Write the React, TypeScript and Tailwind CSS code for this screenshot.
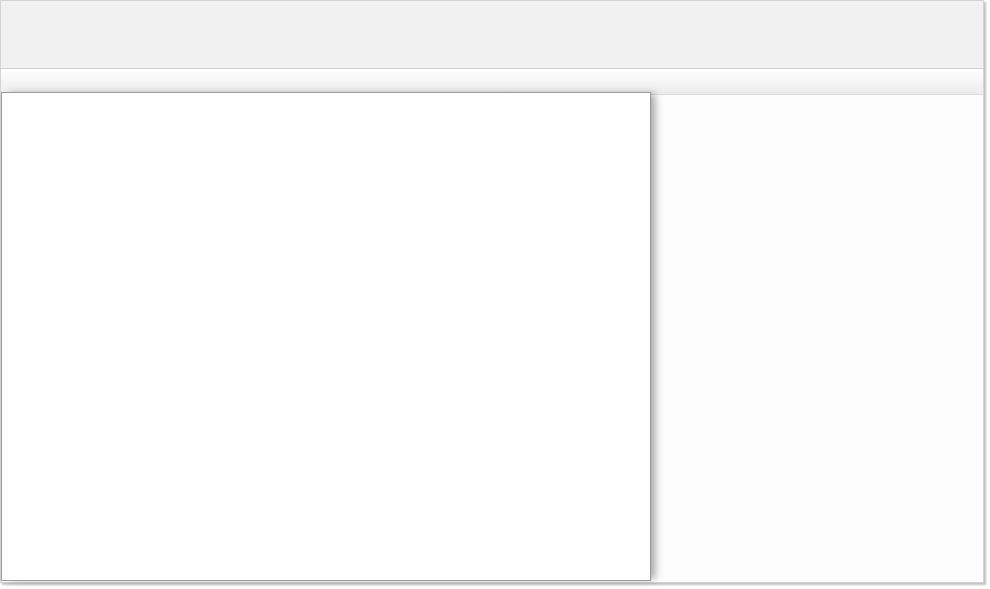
import React from 'react';

const App = () => {
  return (
    <div className="w-[990px] h-[589px] bg-white font-['Liberation_Sans',sans-serif]">
      <div className="w-[984px] h-[583px] flex flex-col border border-[#d4d4d4] bg-[#fdfdfd] shadow-[2px_2px_2px_rgba(0,0,0,0.25)]">
        <header className="h-[68px] shrink-0 bg-[#f1f1f1] border-b border-[#cfcfcf]"></header>
        <div className="h-[26px] shrink-0 bg-gradient-to-b from-white to-[#ececec] border-b border-[#dcdcdc]"></div>
        <div className="flex flex-1 min-h-0 pb-[1px]">
          <div className="relative z-10 -mt-[3px] w-[650px] shrink-0 bg-white border border-[#9a9a9a] shadow-[6px_0_8px_-2px_rgba(0,0,0,0.35)]"></div>
          <div className="flex-1 bg-[#fdfdfd]"></div>
        </div>
      </div>
    </div>
  );
};

export default App;
